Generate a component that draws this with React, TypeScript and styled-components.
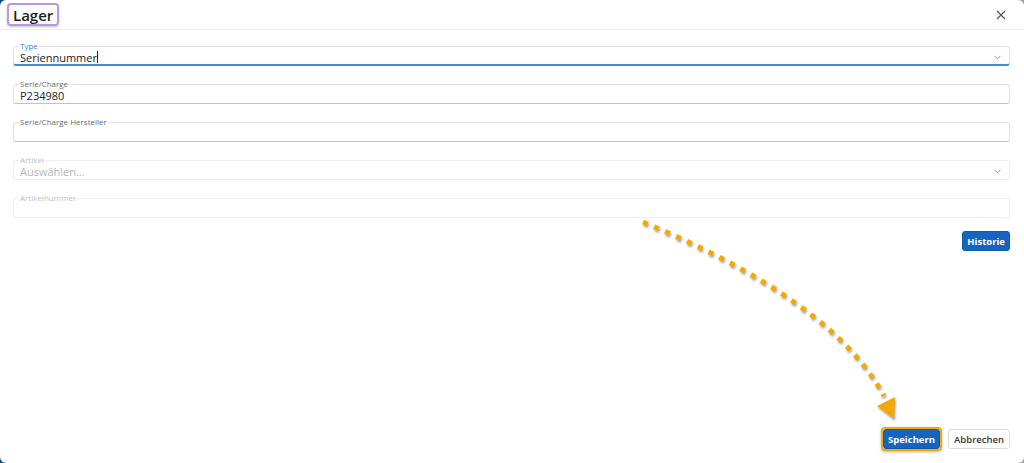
import styled, { createGlobalStyle } from 'styled-components';

const GlobalStyle = createGlobalStyle`
  html, body {
    margin: 0;
    padding: 0;
    height: 100%;
    background: linear-gradient(to right, #0b4f80 50%, #9aa3ab 50%);
  }
  #root {
    height: 100%;
  }
`

interface FieldProps {
  label: string;
  value?: string;
  placeholder?: string;
  focused?: boolean;
  disabled?: boolean;
  select?: boolean;
}

const Field = ({ label, value, placeholder, focused, disabled, select }: FieldProps) => (
  <FieldBox $focused={focused} $disabled={disabled}>
    <FieldLabel $focused={focused} $disabled={disabled}>{label}</FieldLabel>
    <FieldValue $placeholder={!value}>
      {value || placeholder || ''}
      {focused && <Caret />}
    </FieldValue>
    {select && <Chevron viewBox="0 0 8 5"><path d="M0.5 0.5 L4 4 L7.5 0.5" /></Chevron>}
  </FieldBox>
)

export default function App() {
  return (
    <>
      <GlobalStyle />
      <Dialog>
        <Header>
          <TitleMark>Lager</TitleMark>
          <CloseButton viewBox="0 0 10 10"><path d="M1 1 L9 9 M9 1 L1 9" /></CloseButton>
        </Header>
        <Body>
          <Fields>
            <Field label="Type" value="Seriennummer" focused select />
            <Field label="Serie/Charge" value="P234980" />
            <Field label="Serie/Charge Hersteller" />
            <Field label="Artikel" placeholder="Auswählen..." disabled select />
            <Field label="Artikelnummer" disabled />
          </Fields>
          <ActionRow>
            <PrimaryButton>Historie</PrimaryButton>
          </ActionRow>
        </Body>
        <Footer>
          <Highlight>
            <PrimaryButton>Speichern</PrimaryButton>
          </Highlight>
          <SecondaryButton>Abbrechen</SecondaryButton>
        </Footer>
        <ArrowOverlay viewBox="0 0 1024 463">
          <path d="M643 222 Q833 301 884 396" fill="none" stroke="#f5a800" strokeWidth="5" strokeDasharray="5 7" />
          <polygon points="877,406 895,397 894,419" fill="#f5a800" />
        </ArrowOverlay>
      </Dialog>
    </>
  )
}

const Dialog = styled.div`
  position: relative;
  height: 100%;
  box-sizing: border-box;
  background: #fff;
  border-radius: 6px;
  display: flex;
  flex-direction: column;
  font-family: "Open Sans", "Liberation Sans", sans-serif;
  color: #222;
  overflow: hidden;
`
const Header = styled.div`
  height: 29px;
  border-bottom: 1px solid #ebebeb;
  display: flex;
  align-items: center;
  justify-content: space-between;
  padding: 0 18px 0 7px;
`
const TitleMark = styled.div`
  border: 2px solid #b996e6;
  border-radius: 4px;
  padding: 0 4px;
  height: 19px;
  display: flex;
  align-items: center;
  font-size: 15px;
  font-weight: 600;
  color: #1e1e1e;
  box-shadow: 0 1px 2px rgba(0, 0, 0, 0.25);
`
const CloseButton = styled.svg`
  width: 10px;
  height: 10px;
  stroke: #555;
  stroke-width: 1.2;
  fill: none;
`
const Body = styled.div`
  padding: 16px 14px 0 13px;
  display: flex;
  flex-direction: column;
`
const Fields = styled.div`
  display: flex;
  flex-direction: column;
  gap: 18px;
`
const FieldBox = styled.div<{ $focused?: boolean; $disabled?: boolean }>`
  position: relative;
  height: 20px;
  box-sizing: border-box;
  border: 1px solid ${p => (p.$disabled ? '#efefef' : '#e2e2e2')};
  border-bottom: ${p => (p.$focused ? '2px solid #3f8fd8' : p.$disabled ? '1px solid #ececec' : '1px solid #c2c2c2')};
  border-radius: 3px;
  display: flex;
  align-items: center;
  padding: 3px 6px 0 6px;
`
const FieldLabel = styled.span<{ $focused?: boolean; $disabled?: boolean }>`
  position: absolute;
  top: -5px;
  left: 5px;
  background: #fff;
  padding: 0 1px;
  font-size: 8px;
  line-height: 8px;
  color: ${p => (p.$focused ? '#2f86d6' : p.$disabled ? '#bdbdbd' : '#6a6a6a')};
`
const FieldValue = styled.span<{ $placeholder?: boolean }>`
  font-size: 11px;
  line-height: 13px;
  color: ${p => (p.$placeholder ? '#b5b5b5' : '#222')};
  flex: 1;
  display: flex;
  align-items: center;
`
const Caret = styled.span`
  display: inline-block;
  width: 1px;
  height: 12px;
  background: #222;
`
const Chevron = styled.svg`
  width: 7px;
  height: 5px;
  fill: none;
  stroke: #888;
  stroke-width: 1;
  margin-right: 2px;
`
const ActionRow = styled.div`
  display: flex;
  justify-content: flex-end;
  margin-top: 13px;
`
const PrimaryButton = styled.button`
  height: 20px;
  padding: 0 4px;
  border: 1px solid #0f5aa8;
  border-radius: 3px;
  background: #1565c0;
  color: #fff;
  font-family: "Open Sans", "Liberation Sans", sans-serif;
  font-size: 9.5px;
  font-weight: 700;
  display: flex;
  align-items: center;
`
const SecondaryButton = styled.button`
  height: 20px;
  padding: 0 5px;
  border: 1px solid #dcdcdc;
  border-radius: 3px;
  background: #fff;
  color: #333;
  font-family: "Open Sans", "Liberation Sans", sans-serif;
  font-size: 9.5px;
  font-weight: 600;
  display: flex;
  align-items: center;
`
const Footer = styled.div`
  margin-top: auto;
  display: flex;
  justify-content: flex-end;
  align-items: center;
  gap: 6px;
  padding: 0 14px 12px 0;
`
const Highlight = styled.div`
  border: 2px solid #f5a800;
  border-radius: 4px;
  box-shadow: 0 1px 3px rgba(0, 0, 0, 0.3);
  display: flex;
`
const ArrowOverlay = styled.svg`
  position: absolute;
  inset: 0;
  width: 1024px;
  height: 463px;
  pointer-events: none;
  filter: drop-shadow(1px 2px 1px rgba(0, 0, 0, 0.35));
`
